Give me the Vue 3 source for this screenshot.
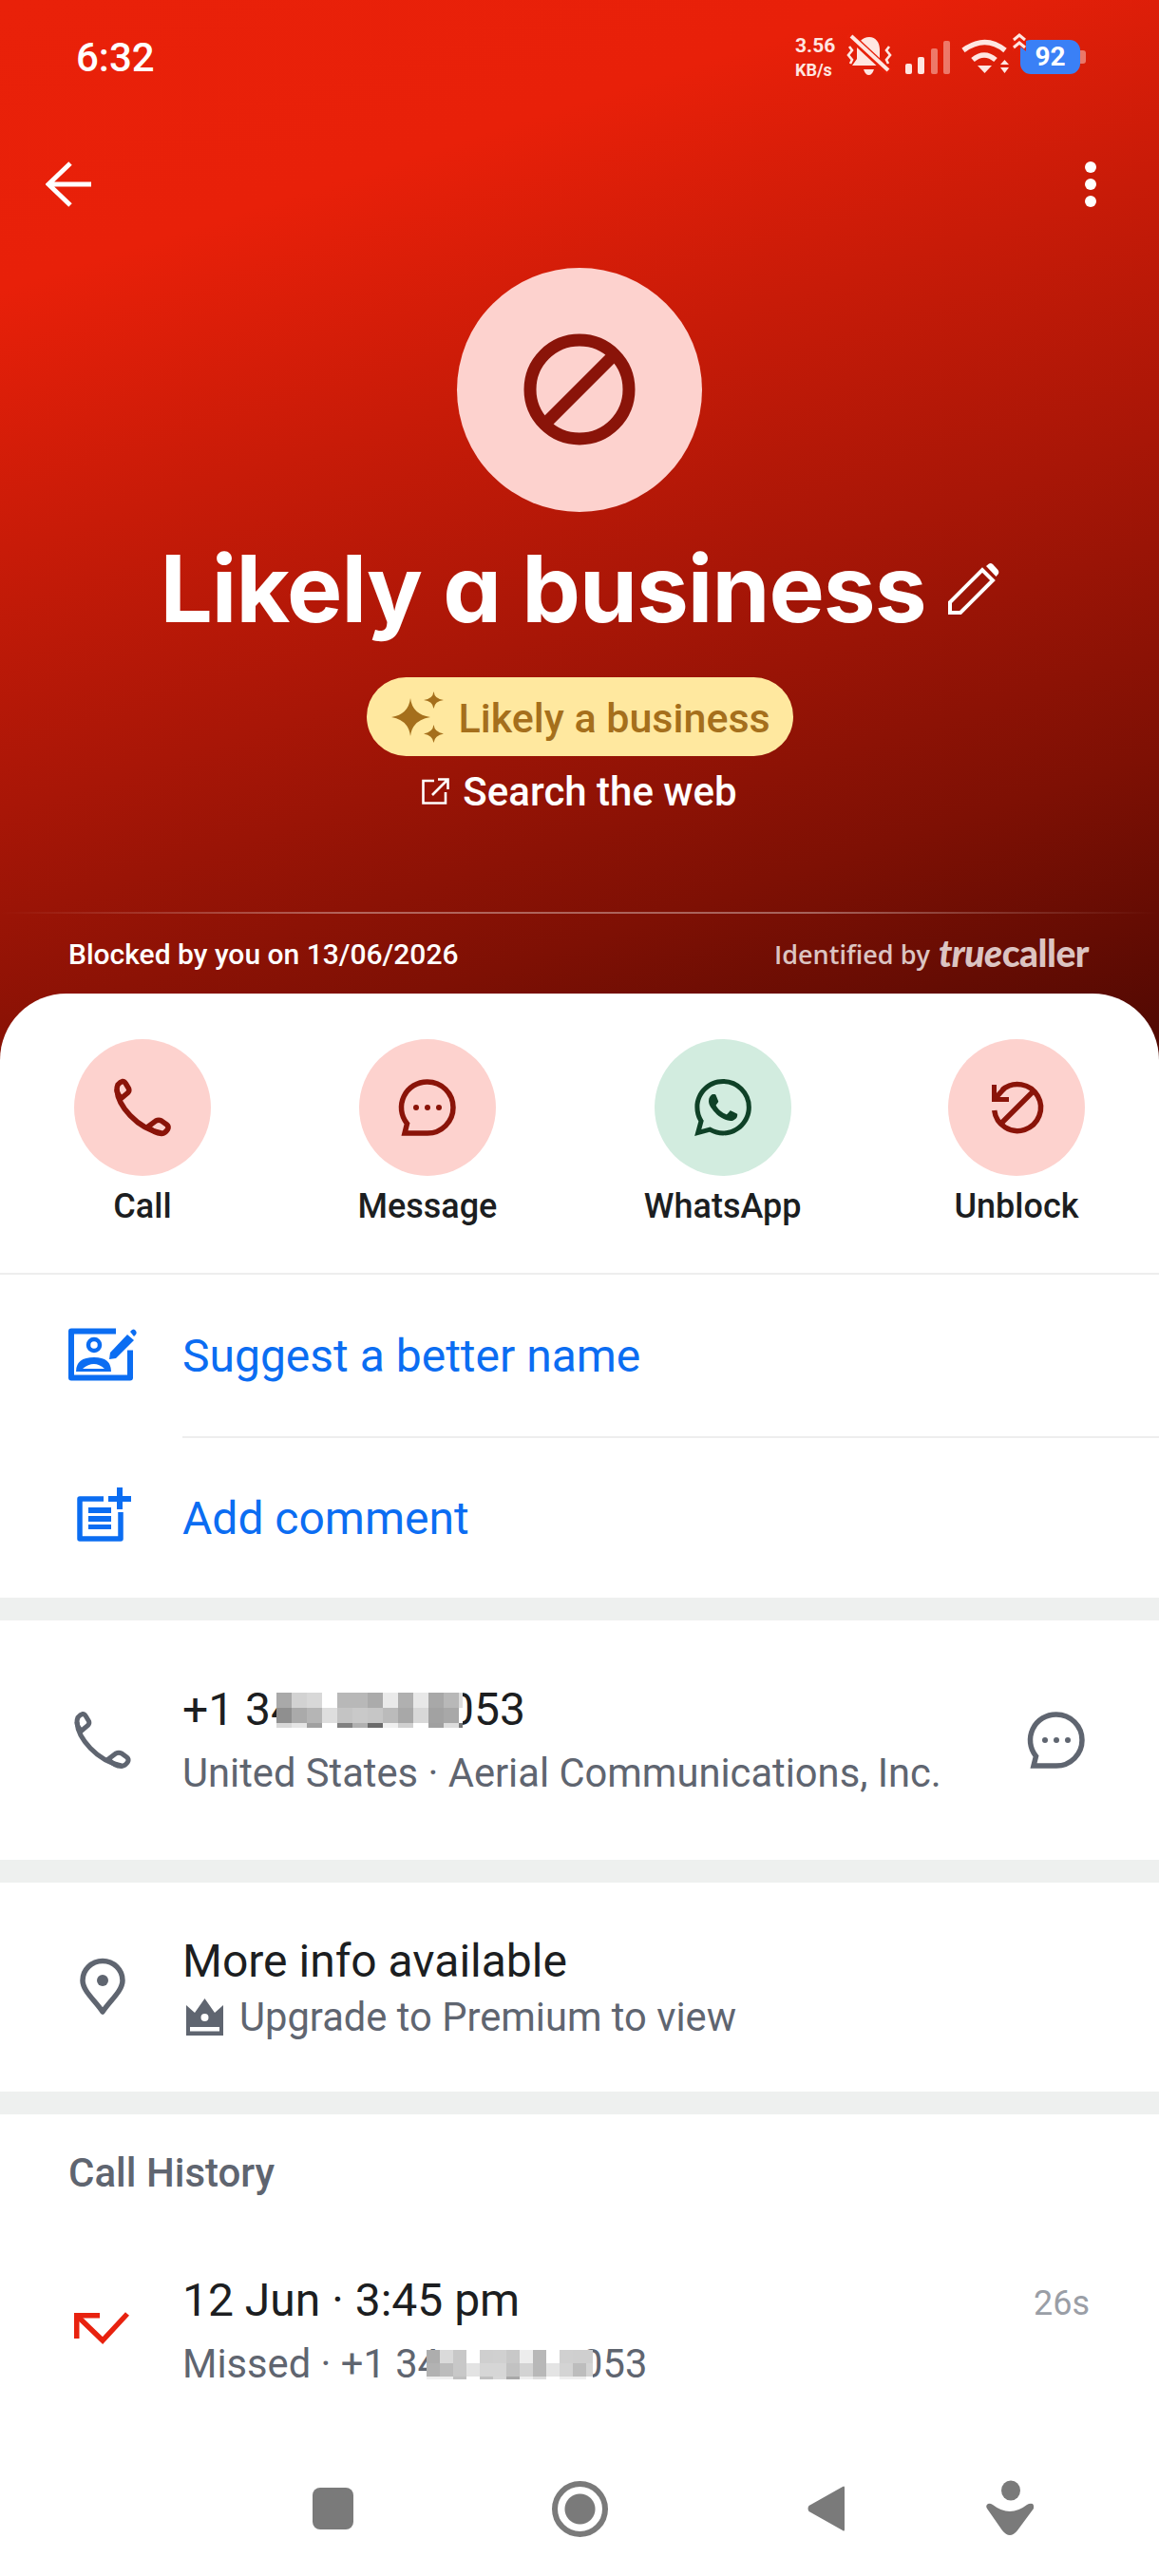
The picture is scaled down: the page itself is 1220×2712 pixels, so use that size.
<script setup>
const phoneEar = 'M4 6Q6.5 3 9 2.5Q11 2.3 12.5 5L15.5 10Q16.5 12.5 14.5 14.5L8 20Q3 16 3 11Q3 8.5 4 6Z'
const phoneBody = 'M3 11C4 28 24 52 50 57'
const phoneFoot = 'M36 50L44 44Q47 42.5 50 44L55.5 48Q58 50 56.5 53Q54 57 50 57.5Q42 57 36 50Z'
const bubble = 'M30 3A27 27 0 1 1 30 57L6 57L8.5 47A27 27 0 0 1 30 3Z'
const wa = 'M17.472 14.382c-.297-.149-1.758-.867-2.03-.967-.273-.099-.471-.148-.67.15-.197.297-.767.966-.94 1.164-.173.199-.347.223-.644.075-.297-.15-1.255-.463-2.39-1.475-.883-.788-1.48-1.761-1.653-2.059-.173-.297-.018-.458.13-.606.134-.133.298-.347.446-.52.149-.174.198-.298.298-.497.099-.198.05-.371-.025-.52-.075-.149-.669-1.612-.916-2.207-.242-.579-.487-.5-.669-.51-.173-.008-.371-.01-.57-.01-.198 0-.52.074-.792.372-.272.297-1.04 1.016-1.04 2.479 0 1.462 1.065 2.875 1.213 3.074.149.198 2.096 3.2 5.077 4.487.709.306 1.262.489 1.694.625.712.227 1.36.195 1.871.118.571-.085 1.758-.719 2.006-1.413.248-.694.248-1.289.173-1.413-.074-.124-.272-.198-.57-.347m-5.421 7.403h-.004a9.87 9.87 0 01-5.031-1.378l-.361-.214-3.741.982.998-3.648-.235-.374a9.86 9.86 0 01-1.51-5.26c.001-5.45 4.436-9.884 9.888-9.884 2.64 0 5.122 1.03 6.988 2.898a9.825 9.825 0 012.893 6.994c-.003 5.45-4.437 9.884-9.885 9.884m8.413-18.297A11.815 11.815 0 0012.05 0C5.495 0 .16 5.335.157 11.892c0 2.096.547 4.142 1.588 5.945L.057 24l6.305-1.654a11.882 11.882 0 005.683 1.448h.005c6.554 0 11.89-5.335 11.893-11.893a11.821 11.821 0 00-3.48-8.413z'

const numberCells = [
  '#a9a9a9','#d2d2d2','#d8d8d8','#ffffff','#b8b8b8','#b8b8b8','#ababab','#eaeaea','#b0b0b0','#e8e8e8','#a8a8a8','#b8b8b8','#dddddd',
  '#8f8f8f','#aaaaaa','#b5b5b5','#dedede','#c4c4c4','#c9c9c9','#c6c6c6','#bbbbbb','#a8a8a8','#d8d8d8','#a2a2a2','#a8a8a8','#ffffff',
  '#d8d8d8','#e5e5e5','#a0a0a0','#ffffff','#808080','#b0b0b0','#6a6a6a','#efefef','#d0d0d0','#ffffff','#a0a0a0','#dddddd','#777777'
]
const missedCells = [
  '#adadad','#dadada','#c8c8c8','#ffffff','#cfcfcf','#d0d0d0','#c8c8c8','#ededed','#b8b8b8','#ffffff','#d0d0d0','#cfcfcf','#cfcfcf',
  '#b2b2b2','#bcbcbc','#c8c8c8','#e3e3e3','#d6d6d6','#d6d6d6','#c2c2c2','#d3d3d3','#b8b8b8','#e4e4e4','#d4d4d4','#bdbdbd','#d4d4d4',
  '#efefef','#eeeeee','#c0c0c0','#ffffff','#c0c0c0','#d8d8d8','#a8a8a8','#eeeeee','#dddddd','#ffffff','#eeeeee','#eeeeee','#ffffff'
]
</script>

<template>
  <div class="screen">
    <header class="hero">
      <div class="status">
        <span class="time">6:32</span>
        <div class="status-icons">
          <div class="speed"><span class="sp-num">3.56</span><span class="sp-unit">KB/s</span></div>
          <svg class="bell" width="46" height="41" viewBox="0 0 46 41">
            <path fill="#ffe6e1" d="M23 1C30 1 34 7 34 14L34 24L39 31L5 31L10 24L10 14C10 7 16 1 23 1Z"/>
            <path fill="#ffe6e1" d="M17 35H28Q26 41 22.5 41Q19 41 17 35Z"/>
            <path stroke="#e8200a" stroke-width="8" d="M1 -2L44 38"/>
            <path stroke="#ffe6e1" stroke-width="4" d="M4 0L43 36"/>
            <path fill="none" stroke="#ffe6e1" stroke-width="2.6" d="M2 11L5 15L1 20L5 25L3 29M44 11L41 15L45 20L41 25L43 29"/>
          </svg>
          <div class="signal">
            <i class="b1"></i><i class="b2"></i><i class="b3"></i><i class="b4"></i>
          </div>
          <svg class="wifi" width="50" height="36" viewBox="0 0 50 36">
            <path fill="none" stroke="#ffe6e1" stroke-width="5.5" d="M2 11Q25 -6 46 11"/>
            <path fill="none" stroke="#ffe6e1" stroke-width="5.5" d="M12 21Q24 11 36 21"/>
            <path fill="#ffe6e1" d="M17 27H32L24.500 35Z"/>
            <path fill="#ffe6e1" d="M41 26L45.500 21L50 26ZM41 29L50 29L45.500 35Z"/>
          </svg>
          <div class="battery">
            <svg class="chev" width="18" height="22" viewBox="0 0 18 22">
              <path d="M0 8L7 1L14 8V20L7 14L0 20Z" fill="#e8200a"/>
              <path fill="none" stroke="#ffe6e1" stroke-width="3" d="M1 8L7 3L13 8M1 16L7 11L13 16"/>
            </svg>
            <span class="bat-body">92</span>
            <span class="bat-nub"></span>
          </div>
        </div>
      </div>

      <div class="toolbar">
        <svg width="48" height="48" viewBox="0 0 48 48" fill="none" stroke="#fff" stroke-width="5">
          <path d="M48 24H3M26 2L3 24L26 46"/>
        </svg>
        <div class="dots"><i></i><i></i><i></i></div>
      </div>

      <div class="avatar">
        <svg width="118" height="118" viewBox="0 0 118 118" fill="none" stroke="#8a1409" stroke-width="13">
          <circle cx="59" cy="59" r="52"/>
          <path d="M22 96L96 22"/>
        </svg>
      </div>

      <div class="title-row">
        <h1 class="title">Likely a business</h1>
        <svg class="pencil" width="54" height="54" viewBox="0 0 54 54">
          <path fill="none" stroke="#fff" stroke-width="4" d="M2 52V41L36 7L47 18L13 52Z"/>
          <path fill="#fff" d="M40 3L43 0.500Q45 -0.500 47 1L52.500 7Q54 9 53 11L50.500 14Z"/>
        </svg>
      </div>

      <div class="chip">
        <svg width="56" height="54" viewBox="0 0 56 54" fill="#a56f1c">
          <path d="M20 7Q22 24 41 27Q22 30 20 47Q18 30 0 27Q18 24 20 7Z"/>
          <path d="M44.500 0Q45.500 8 55 9Q45.500 10 44.500 18Q43.500 10 34 9Q43.500 8 44.500 0Z"/>
          <path d="M44.500 35Q45.500 43 55 44.500Q45.500 46 44.500 54Q43.500 46 34 44.500Q43.500 43 44.500 35Z"/>
        </svg>
        <span>Likely a business</span>
      </div>

      <div class="search">
        <svg width="29" height="28" viewBox="0 0 29 28" fill="none" stroke="#fff" stroke-width="2.600">
          <path d="M13 3H1.500V26.500H25V15"/>
          <path d="M11 18L27 2M17 1.500H27.500V12"/>
        </svg>
        <span>Search the web</span>
      </div>

      <div class="rule"></div>

      <div class="meta">
        <span class="blocked">Blocked by you on 13/06/2026</span>
        <span class="identified"><span>Identified by</span><span class="tc"><em>true</em>caller</span></span>
      </div>
    </header>

    <main class="card">
      <section class="actions">
        <div class="action">
          <div class="circle red">
            <svg width="60" height="60" viewBox="0 0 60 60" class="ic-red">
              <path :d="phoneEar" fill="none" stroke="currentColor" stroke-width="5.500"/>
              <path :d="phoneBody" fill="none" stroke="currentColor" stroke-width="5.500"/>
              <path :d="phoneFoot" fill="none" stroke="currentColor" stroke-width="5.500"/>
            </svg>
          </div>
          <span>Call</span>
        </div>
        <div class="action">
          <div class="circle red">
            <svg width="60" height="60" viewBox="0 0 60 60" class="ic-red">
              <path :d="bubble" fill="none" stroke="currentColor" stroke-width="5.500"/>
              <circle cx="18" cy="30" r="3" fill="currentColor"/>
              <circle cx="30" cy="30" r="3" fill="currentColor"/>
              <circle cx="42" cy="30" r="3" fill="currentColor"/>
            </svg>
          </div>
          <span>Message</span>
        </div>
        <div class="action">
          <div class="circle green">
            <svg width="60" height="60" viewBox="0 0 24 24"><path :d="wa" fill="#0f4127"/></svg>
          </div>
          <span>WhatsApp</span>
        </div>
        <div class="action">
          <div class="circle red">
            <svg width="60" height="60" viewBox="0 0 60 60" class="ic-red">
              <path d="M15 11.500A24.500 24.500 0 1 1 6.700 33" fill="none" stroke="currentColor" stroke-width="5.500"/>
              <path d="M13.300 47.300L48.300 12.300" fill="none" stroke="currentColor" stroke-width="5.500"/>
              <path d="M4 6V24H22V19H9V6Z" fill="currentColor"/>
              <path d="M7 21L17 10" fill="none" stroke="currentColor" stroke-width="5.500"/>
            </svg>
          </div>
          <span>Unblock</span>
        </div>
      </section>

      <section class="links">
        <div class="link-row first">
          <div class="ic-col">
            <svg class="suggest" width="72" height="56" viewBox="0 0 72 56" fill="none">
              <path d="M50 4H3V53H65V24" stroke="#0b6df2" stroke-width="6" stroke-linejoin="round" transform="translate(0 -0.500)"/>
              <circle cx="27" cy="18" r="6" stroke="#0b6df2" stroke-width="4.500"/>
              <path d="M8 46Q8 31 27 31Q45 31 45 46Z" fill="#0b6df2"/>
              <path d="M15 43Q27 33 38 43Z" fill="#fff"/>
              <path d="M44 26L62 7L69 13L50 32L43 33Z" fill="#0b6df2"/>
              <path d="M65 4L67 2Q68.500 1 70 2L71.500 4Q72 5.500 71 7L69 9Z" fill="#0b6df2"/>
            </svg>
          </div>
          <span class="link-text">Suggest a better name</span>
        </div>
        <div class="link-row">
          <div class="ic-col">
            <svg class="add" width="58" height="58" viewBox="0 0 58 58">
              <path d="M28 12H3V54H46V26" fill="none" stroke="#0b6df2" stroke-width="5.500" stroke-linejoin="round"/>
              <path d="M12 21H36V27H12ZM12 30H36V36H12ZM12 39H36V44H12Z" fill="#0b6df2"/>
              <path d="M42 0H48V9H57V15H48V23H42V15H33V9H42Z" fill="#0b6df2"/>
            </svg>
          </div>
          <span class="link-text">Add comment</span>
        </div>
      </section>

      <div class="band"></div>

      <section class="info phone-row">
        <div class="ic-col">
          <svg class="ph-gray ic-gray" width="60" height="60" viewBox="0 0 60 60">
            <path :d="phoneEar" fill="none" stroke="currentColor" stroke-width="5"/>
            <path :d="phoneBody" fill="none" stroke="currentColor" stroke-width="5"/>
            <path :d="phoneFoot" fill="none" stroke="currentColor" stroke-width="5"/>
          </svg>
        </div>
        <div class="info-text">
          <div class="main-line number">
            <span>+1 34</span>
            <div class="mosaic m-large">
              <i v-for="(c, i) in numberCells" :key="i" :style="{ background: c }"></i>
            </div>
            <span>053</span>
          </div>
          <div class="sub-line">United States · Aerial Communications, Inc.</div>
        </div>
        <svg class="msg-gray ic-gray" width="60" height="60" viewBox="0 0 60 60">
          <path :d="bubble" fill="none" stroke="currentColor" stroke-width="5.500"/>
          <circle cx="18" cy="30" r="3" fill="currentColor"/>
          <circle cx="30" cy="30" r="3" fill="currentColor"/>
          <circle cx="42" cy="30" r="3" fill="currentColor"/>
        </svg>
      </section>

      <div class="band"></div>

      <section class="info more-row">
        <div class="ic-col">
          <svg class="pin" width="48" height="60" viewBox="0 0 48 60" fill="none">
            <path d="M24 56C16 44 3 34 3 23A21 20.500 0 0 1 45 23C45 34 32 44 24 56Z" stroke="#5f6570" stroke-width="5.500" stroke-linejoin="round"/>
            <circle cx="24" cy="23" r="6" fill="#5f6570"/>
          </svg>
        </div>
        <div class="info-text">
          <div class="main-line">More info available</div>
          <div class="sub-line premium">
            <svg width="39" height="39" viewBox="0 0 39 39">
              <path fill="#5f6570" d="M0 7L9 15L19.500 0L30 15L39 7V39H0Z"/>
              <circle cx="19.500" cy="20" r="4" fill="#fff"/>
              <rect x="4" y="30" width="31" height="4.500" fill="#fff"/>
            </svg>
            <span>Upgrade to Premium to view</span>
          </div>
        </div>
      </section>

      <div class="band"></div>

      <h2 class="history">Call History</h2>

      <section class="info call-row">
        <div class="ic-col">
          <svg class="missed" width="58" height="33" viewBox="0 0 58 33" fill="none" stroke="#e8220f" stroke-width="5.500">
            <path d="M27 2.750H2.750V27"/>
            <path d="M3 3L30 29L56 1"/>
          </svg>
        </div>
        <div class="info-text">
          <div class="main-line">12 Jun · 3:45 pm</div>
          <div class="sub-line number">
            <span>Missed · +1 34</span>
            <div class="mosaic m-small">
              <i v-for="(c, i) in missedCells" :key="i" :style="{ background: c }"></i>
            </div>
            <span>053</span>
          </div>
        </div>
        <span class="dur">26s</span>
      </section>

      <nav class="nav">
        <span class="nav-square"></span>
        <span class="nav-circle"></span>
        <svg class="nav-back" width="39" height="48" viewBox="0 0 39 48">
          <path fill="#7a7a7a" d="M39 2V46Q39 48.500 37 47L1.500 27Q-0.500 24 1.500 21L37 1Q39 -0.500 39 2Z"/>
        </svg>
        <svg class="nav-assist" width="52" height="58" viewBox="0 0 52 58">
          <ellipse cx="27" cy="10" rx="10" ry="10.500" fill="#7a7a7a"/>
          <path fill="#7a7a7a" d="M2 29Q0 26 3 24Q5 23 8 25Q17 32 26 32Q35 32 44 25Q47 23 50 24Q52 26 51 29L34 52Q26 62 18 52Z"/>
        </svg>
      </nav>
    </main>
  </div>
</template>

<style>
html, body { margin: 0; padding: 0; background: #fff; }
</style>

<style scoped>
* { box-sizing: border-box; }
.screen {
  width: 1220px;
  height: 2712px;
  overflow: hidden;
  display: flex;
  flex-direction: column;
  font-family: Roboto, "Liberation Sans", sans-serif;
  background: linear-gradient(162deg, #e92109 0%, #e82009 20%, #a81607 56%, #7e1004 78%, #4c0802 100%) no-repeat;
  background-size: 100% 1130px;
}
.hero { height: 1046px; display: flex; flex-direction: column; color: #fff; }
.status {
  height: 110px;
  padding: 37px 77px 0 80px;
  display: flex;
  justify-content: space-between;
  align-items: flex-start;
}
.time { font-size: 42px; font-weight: 500; line-height: 48px; color: #fff; }
.status-icons { display: flex; align-items: flex-start; height: 44px; margin-top: 1px; }
.speed { width: 46px; display: flex; flex-direction: column; font-weight: 700; color: #ffe6e1; margin-top: -3px; }
.sp-num { font-size: 21px; line-height: 26px; }
.sp-unit { font-size: 18px; line-height: 26px; }
.bell { margin-left: 9px; display: block; overflow: visible; }
.signal { margin-left: 15px; margin-top: 5px; width: 47px; height: 35px; display: flex; align-items: flex-end; justify-content: space-between; }
.signal i { display: block; width: 7px; border-radius: 2px; background: #ffe6e1; }
.signal .b1 { height: 11px; }
.signal .b2 { height: 18px; }
.signal .b3 { height: 27px; opacity: .45; }
.signal .b4 { height: 35px; opacity: .45; }
.wifi { margin-left: 12px; margin-top: 4px; overflow: visible; }
.battery { position: relative; display: flex; align-items: center; margin-left: 12px; margin-top: 4px; }
.chev { position: absolute; left: -8px; top: -8px; }
.bat-body {
  width: 63px; height: 36px; background: #3a80f6; border-radius: 11px;
  color: #fff; font-size: 28px; font-weight: 700; line-height: 36px; text-align: center;
}
.bat-nub { width: 6px; height: 14px; border-radius: 0 3px 3px 0; background: rgba(255, 230, 225, .45); }

.toolbar {
  margin-top: 60px;
  padding: 0 66px 0 48px;
  height: 48px;
  display: flex;
  justify-content: space-between;
  align-items: center;
}
.dots { display: flex; flex-direction: column; gap: 6px; }
.dots i { display: block; width: 12px; height: 12px; border-radius: 50%; background: #fff; }

.avatar {
  width: 258px; height: 258px; border-radius: 50%;
  margin: 64px auto 0;
  background: #fdd2ce;
  display: flex; align-items: center; justify-content: center;
}
.title-row { margin-top: 21px; height: 120px; display: flex; justify-content: center; align-items: center; gap: 23px; }
.title {
  margin: 0; font-family: Inter, sans-serif; font-size: 98px; font-weight: 700; line-height: 120px;
  color: #fff; font-feature-settings: "cv11" 1; letter-spacing: -1px; white-space: nowrap;
}
.pencil { overflow: visible; flex: none; }
.chip {
  margin: 33px auto 0;
  width: 449px; height: 84px; border-radius: 42px;
  background: #ffe89f; color: #a56f1c;
  display: flex; align-items: center; gap: 15px; padding-left: 26px;
  font-size: 43px; font-weight: 500; white-space: nowrap;
}
.chip span { margin-top: 2px; }
.search {
  margin-top: 13px; height: 48px; display: flex; justify-content: center; align-items: center; gap: 14px;
  font-size: 42px; font-weight: 500; color: #fff;
}
.rule {
  margin-top: 103px; height: 2px;
  background: linear-gradient(90deg, rgba(255,255,255,0) 0%, rgba(255,255,255,.35) 30%, rgba(255,255,255,.35) 70%, rgba(255,255,255,0) 100%);
}
.meta {
  padding: 0 74px 0 72px; height: 84px; display: flex; justify-content: space-between; align-items: center;
}
.blocked { font-size: 30px; font-weight: 500; color: #fff; }
.identified { font-family: "Open Sans", sans-serif; font-size: 27px; font-weight: 600; color: #dcc4c2; display: flex; align-items: center; gap: 9px; white-space: nowrap; }
.tc { font-family: Lato, sans-serif; font-weight: 900; font-size: 39px; letter-spacing: -0.5px; line-height: 40px; margin-top: -3px; }
.tc em { font-style: italic; }

.card {
  flex: 1;
  background: #fff;
  border-radius: 70px 70px 0 0;
  display: flex;
  flex-direction: column;
  min-height: 0;
}
.actions {
  padding: 48px 78px 0 78px;
  height: 296px;
  border-bottom: 2px solid #eeeeee;
  display: flex;
  justify-content: space-between;
}
.action { display: flex; flex-direction: column; align-items: center; font-size: 36px; font-weight: 500; color: #1c1e21; line-height: 44px; white-space: nowrap; gap: 10px; }
.circle { width: 144px; height: 144px; border-radius: 50%; display: flex; align-items: center; justify-content: center; }
.circle.red { background: #fdd2ce; }
.circle.green { background: #d2ecdf; }
.ic-red { color: #8a1409; overflow: visible; }
.ic-gray { color: #5f6570; overflow: visible; }

.links { display: flex; flex-direction: column; }
.link-row { height: 170px; display: flex; align-items: center; position: relative; }
.link-row.first::after { content: ""; position: absolute; left: 192px; right: 0; bottom: -2px; height: 2px; background: #eeeeee; }
.link-row + .link-row { margin-top: 2px; height: 168px; }
.ic-col { width: 192px; flex: none; display: flex; align-items: center; }
.ic-col svg { flex: none; overflow: visible; }
.suggest { margin-left: 72px; margin-top: -3px; }
.add { margin-left: 81px; margin-top: -6px; }
.link-text { font-size: 48px; color: #0b6df2; }

.band { height: 24px; background: #eef0ef; flex: none; }
.info { display: flex; align-items: center; }
.phone-row { height: 252px; padding-right: 78px; }
.more-row { height: 220px; }
.info-text { flex: 1; min-width: 0; }
.ph-gray { margin-left: 78px; }
.pin { margin-left: 84px; }
.missed { margin-left: 78px; margin-top: -8px; }
.msg-gray { flex: none; }
.phone-row .info-text { padding-top: 2px; }
.more-row .info-text { padding-top: 3px; }
.main-line { font-size: 48px; line-height: 68px; color: #1c1e21; white-space: nowrap; }
.sub-line { font-size: 41.700px; line-height: 66px; color: #5f6570; white-space: nowrap; }
.more-row .main-line { line-height: 60px; }
.more-row .sub-line { line-height: 58px; }
.premium { display: flex; align-items: center; gap: 17px; padding-left: 4px; }
.number { display: flex; align-items: center; }
.mosaic { display: grid; flex: none; position: relative; }
.mosaic i { display: block; }
.m-large { grid-template-columns: repeat(12, 16px) 4px; grid-template-rows: 16px 16px 5px; margin: 0 -15px 0 -21px; }
.m-small { grid-template-columns: repeat(12, 14px) 7px; grid-template-rows: 14px 14px 3px; margin: 0 -13px 0 -14px; }
.history { margin: 0; padding: 40px 0 0 72px; font-size: 42px; line-height: 44px; font-weight: 500; color: #5f6570; }
.call-row { margin-top: 60px; height: 170px; padding-right: 73px; align-items: center; }
.dur { align-self: flex-start; font-size: 36px; line-height: 44px; color: #9a9ea6; margin-top: 33px; }
.nav { margin-top: auto; height: 142px; padding-left: 329px; display: flex; align-items: center; flex: none; }
.nav-square { width: 43px; height: 44px; border-radius: 8px; background: #7a7a7a; }
.nav-circle { margin-left: 209px; width: 59px; height: 59px; border-radius: 50%; border: 6px solid #7a7a7a; display: flex; background: radial-gradient(circle, #7a7a7a 0 15.500px, #fff 16.500px); }
.nav-back { margin-left: 210px; overflow: visible; }
.nav-assist { margin-left: 148px; overflow: visible; }
</style>
